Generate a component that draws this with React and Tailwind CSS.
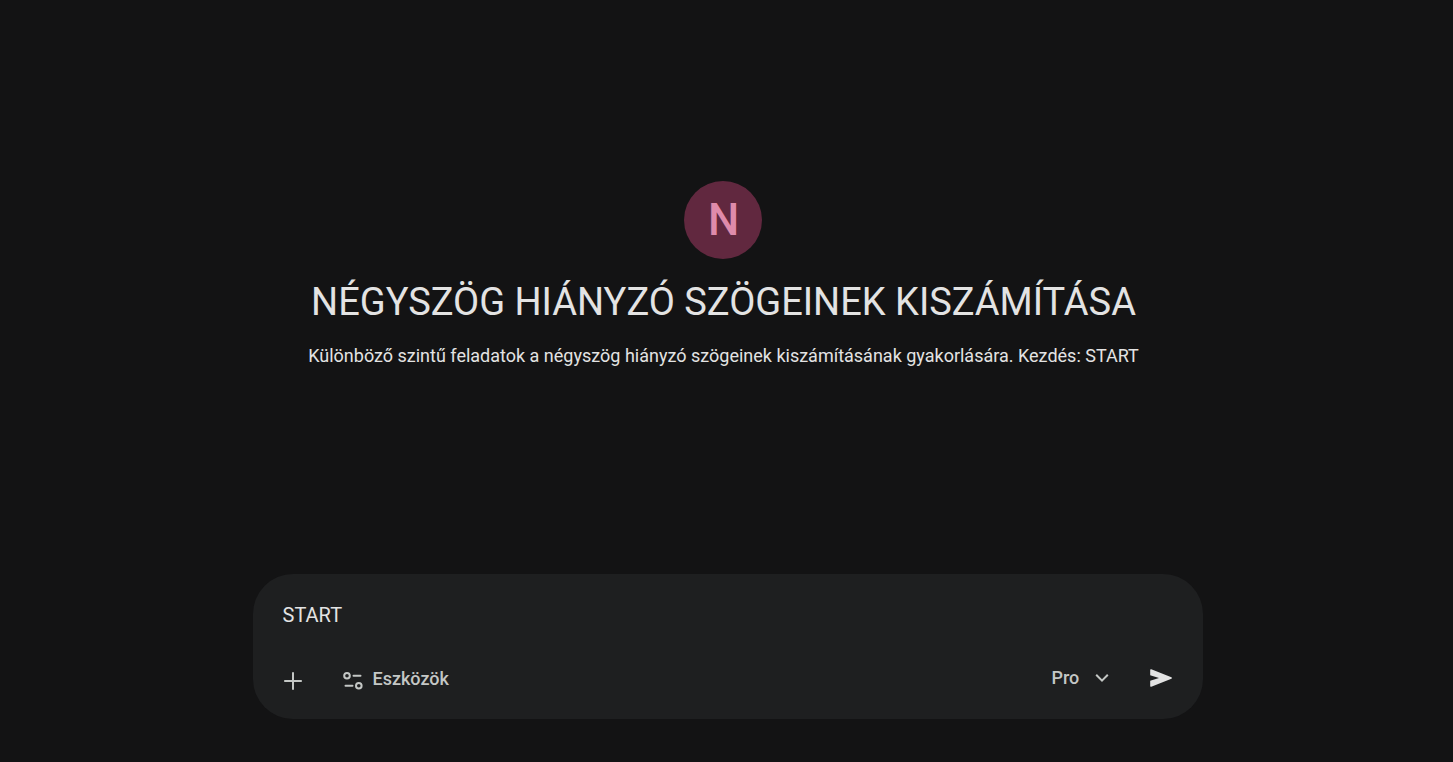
import { useState } from "react";

const PlusIcon = () => (
  <svg width="20" height="20" viewBox="0 0 20 20" fill="none" stroke="currentColor" strokeWidth="2">
    <path d="M10 1.2v17.6M1.2 10h17.6" />
  </svg>
);

const ToolsIcon = () => (
  <svg
    width="20"
    height="20"
    viewBox="0 0 20 20"
    fill="none"
    stroke="currentColor"
    strokeWidth="2"
    strokeLinecap="round"
    className="mt-1"
  >
    <circle cx="4" cy="4.8" r="2.8" />
    <path d="M10.5 4.8h7M2.5 14.8h7" />
    <circle cx="15.8" cy="14.8" r="2.8" />
  </svg>
);

const ChevronIcon = () => (
  <svg
    width="14"
    height="14"
    viewBox="0 0 14 14"
    fill="none"
    stroke="currentColor"
    strokeWidth="2"
    className="pointer-events-none absolute right-0"
  >
    <path d="M1.2 3.8 7 9.6l5.8-5.8" />
  </svg>
);

const SendIcon = () => (
  <svg width="24" height="20" viewBox="0 0 24 20" fill="currentColor">
    <path d="M1.2 1.9Q1.2.9 2.3 1.3L22.4 9.2Q23.7 10 22.4 10.8L2.3 18.7Q1.2 19.1 1.2 18.1V12.8L10 10 1.2 7.2Z" />
  </svg>
);

const Hero = () => (
  <section className="flex flex-col items-center pr-1.5 text-center text-[#e3e3e3]">
    <div className="flex size-[78px] items-center justify-center rounded-full bg-[#61283f] text-[44px] font-medium text-[#df8bab]">
      N
    </div>
    <h1 className="mt-[17px] text-[38px] leading-[52px]">
      NÉGYSZÖG HIÁNYZÓ SZÖGEINEK KISZÁMÍTÁSA
    </h1>
    <p className="mt-3.5 text-[18px] leading-7">
      Különböző szintű feladatok a négyszög hiányzó szögeinek kiszámításának
      gyakorlására. Kezdés: START
    </p>
  </section>
);

const Composer = () => {
  const [prompt, setPrompt] = useState("START");

  return (
    <form
      onSubmit={(e) => e.preventDefault()}
      className="ml-0.5 w-full max-w-[950px] rounded-[40px] bg-[#1e1f20] px-[30px] pt-[27px] pb-[19px] text-[#c4c7c5]"
    >
      <textarea
        aria-label="Prompt"
        rows={1}
        value={prompt}
        onChange={(e) => setPrompt(e.target.value)}
        className="block w-full resize-none overflow-hidden text-[20px] leading-7 text-[#e3e3e3] outline-none"
      />

      <div className="mt-[29px] flex items-center justify-between">
        <div className="flex items-center gap-10">
          <button type="button" aria-label="+" className="pt-1">
            <PlusIcon />
          </button>
          <button type="button" className="flex items-center gap-2.5 text-[18px] leading-10 font-medium">
            <ToolsIcon />
            Eszközök
          </button>
        </div>

        <div className="flex items-center gap-10 pb-0.5">
          <div className="relative flex items-center">
            <select
              aria-label="Model"
              className="appearance-none pr-[29px] text-[18px] leading-10 font-medium outline-none"
            >
              <option>Pro</option>
            </select>
            <ChevronIcon />
          </div>
          <button type="submit" aria-label="Send" className="text-[#e3e3e3]">
            <SendIcon />
          </button>
        </div>
      </div>
    </form>
  );
};

const App = () => {
  return (
    <main className="flex min-h-screen flex-col items-center justify-between bg-[#131314] px-6 pt-[181px] pb-[43px] font-['Roboto',sans-serif]">
      <Hero />
      <Composer />
    </main>
  );
};

export default App;
